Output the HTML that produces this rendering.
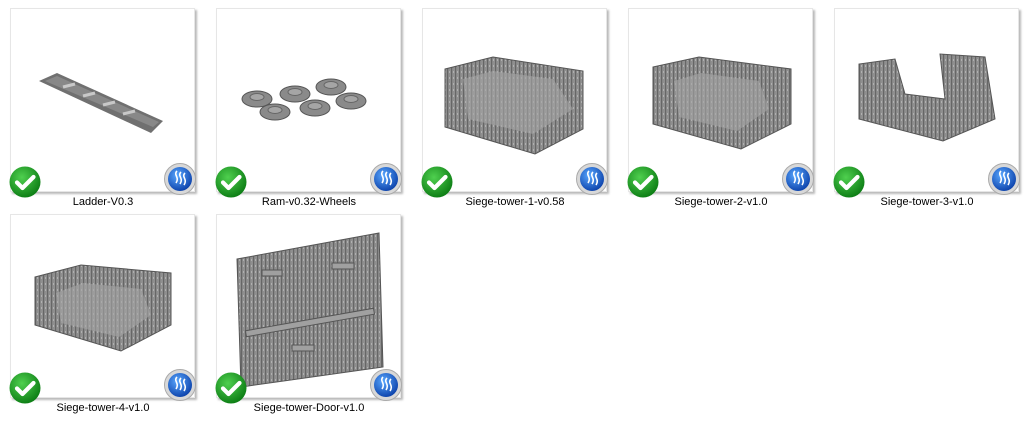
<!DOCTYPE html>
<html><head><meta charset="utf-8"><style>
body{margin:0;width:1024px;height:432px;background:#fff;position:relative;overflow:hidden;font-family:"Liberation Sans",sans-serif}
.t{position:absolute;width:183px;height:182px;background:#fff;border:1px solid #e6e6e6;box-shadow:2px 2px 2px rgba(0,0,0,.28)}
.t svg.m{position:absolute;left:0;top:0}
.l{position:absolute;width:206px;text-align:center;font-size:11px;color:#000}
.ck{position:absolute;left:-2px;bottom:-7px;width:32px;height:32px}
.bl{position:absolute;right:-2px;bottom:-4px;width:32px;height:32px}
</style></head><body>
<svg width="0" height="0" style="position:absolute"><defs>
<pattern id="w" width="4" height="6" patternUnits="userSpaceOnUse"><rect width="4" height="6" fill="#8f8f8f"/><rect width="1.2" height="6" fill="#666"/><rect x="2" y="2" width="1" height="2" fill="#b0b0b0"/></pattern>
<radialGradient id="g" cx=".4" cy=".35" r=".7"><stop offset="0" stop-color="#4fd04f"/><stop offset="1" stop-color="#0a7a12"/></radialGradient>
<radialGradient id="b" cx=".4" cy=".35" r=".7"><stop offset="0" stop-color="#5aa8ff"/><stop offset="1" stop-color="#0a3fa8"/></radialGradient>
<symbol id="C" viewBox="0 0 32 32"><circle cx="16" cy="16" r="15.5" fill="url(#g)"/><path d="M8 16.5l5.5 5.5 11-11" stroke="#fff" stroke-width="4.2" fill="none" stroke-linecap="round" stroke-linejoin="round"/></symbol>
<symbol id="B" viewBox="0 0 32 32"><circle cx="16" cy="16" r="15.5" fill="#d8d8d8" stroke="#aaa"/><circle cx="16" cy="16" r="12" fill="url(#b)"/><path d="M13 8c-4 4 3 6-1 12M17 9c-4 4 3 6-1 12M21 10c-4 4 3 6-1 12" stroke="#fff" stroke-width="1.6" fill="none"/></symbol>
</defs></svg>

<div class="t" style="left:10px;top:8px"><svg class="m" width="183" height="182"><polygon points="28,72 46,64 152,112 140,124" fill="#707070"/><polygon points="34,72 46,67 148,113 142,118" fill="#888"/><g stroke="#c8c8c8" stroke-width="3"><line x1="52" y1="78" x2="64" y2="75"/><line x1="72" y1="87" x2="84" y2="84"/><line x1="92" y1="96" x2="104" y2="93"/><line x1="112" y1="105" x2="124" y2="102"/></g></svg><svg class="ck"><use href="#C"/></svg><svg class="bl"><use href="#B"/></svg></div>
<div class="l" style="left:0;top:196px">Ladder-V0.3</div>

<div class="t" style="left:216px;top:8px"><svg class="m" width="183" height="182"><g fill="#8a8a8a" stroke="#555"><ellipse cx="40" cy="90" rx="15" ry="8"/><ellipse cx="78" cy="85" rx="15" ry="8"/><ellipse cx="114" cy="78" rx="15" ry="8"/><ellipse cx="58" cy="103" rx="15" ry="8"/><ellipse cx="98" cy="99" rx="15" ry="8"/><ellipse cx="134" cy="92" rx="15" ry="8"/></g><g fill="#a5a5a5" stroke="#666"><ellipse cx="40" cy="88" rx="7" ry="3.5"/><ellipse cx="78" cy="83" rx="7" ry="3.5"/><ellipse cx="114" cy="76" rx="7" ry="3.5"/><ellipse cx="58" cy="101" rx="7" ry="3.5"/><ellipse cx="98" cy="97" rx="7" ry="3.5"/><ellipse cx="134" cy="90" rx="7" ry="3.5"/></g></svg><svg class="ck"><use href="#C"/></svg><svg class="bl"><use href="#B"/></svg></div>
<div class="l" style="left:206px;top:196px">Ram-v0.32-Wheels</div>

<div class="t" style="left:422px;top:8px"><svg class="m" width="183" height="182"><polygon points="22,60 70,48 160,62 160,120 112,145 22,118" fill="url(#w)" stroke="#555"/><polygon points="40,70 70,62 130,70 150,100 110,125 45,110" fill="#a5a5a5" opacity=".6"/></svg><svg class="ck"><use href="#C"/></svg><svg class="bl"><use href="#B"/></svg></div>
<div class="l" style="left:412px;top:196px">Siege-tower-1-v0.58</div>

<div class="t" style="left:628px;top:8px"><svg class="m" width="183" height="182"><polygon points="24,58 70,48 162,60 162,115 112,140 24,115" fill="url(#w)" stroke="#555"/><polygon points="45,72 72,64 130,72 140,100 108,122 50,108" fill="#a5a5a5" opacity=".6"/></svg><svg class="ck"><use href="#C"/></svg><svg class="bl"><use href="#B"/></svg></div>
<div class="l" style="left:618px;top:196px">Siege-tower-2-v1.0</div>

<div class="t" style="left:834px;top:8px"><svg class="m" width="183" height="182"><polygon points="24,110 24,55 60,50 70,85 110,90 105,45 150,48 160,110 108,132" fill="url(#w)" stroke="#555"/></svg><svg class="ck"><use href="#C"/></svg><svg class="bl"><use href="#B"/></svg></div>
<div class="l" style="left:824px;top:196px">Siege-tower-3-v1.0</div>

<div class="t" style="left:10px;top:214px"><svg class="m" width="183" height="182"><polygon points="24,62 70,50 160,58 160,110 110,136 24,110" fill="url(#w)" stroke="#555"/><polygon points="45,78 72,68 130,74 140,100 108,122 50,108" fill="#a5a5a5" opacity=".6"/></svg><svg class="ck"><use href="#C"/></svg><svg class="bl"><use href="#B"/></svg></div>
<div class="l" style="left:0;top:402px">Siege-tower-4-v1.0</div>

<div class="t" style="left:216px;top:214px"><svg class="m" width="183" height="182"><polygon points="20,44 162,18 166,152 24,172" fill="url(#w)" stroke="#555"/><g fill="#a0a0a0" stroke="#555"><rect x="45" y="55" width="20" height="6"/><rect x="115" y="48" width="22" height="6"/><rect x="28" y="105" width="130" height="6" transform="rotate(-10 90 108)"/><rect x="75" y="130" width="22" height="6"/></g></svg><svg class="ck"><use href="#C"/></svg><svg class="bl"><use href="#B"/></svg></div>
<div class="l" style="left:206px;top:402px">Siege-tower-Door-v1.0</div>
</body></html>
